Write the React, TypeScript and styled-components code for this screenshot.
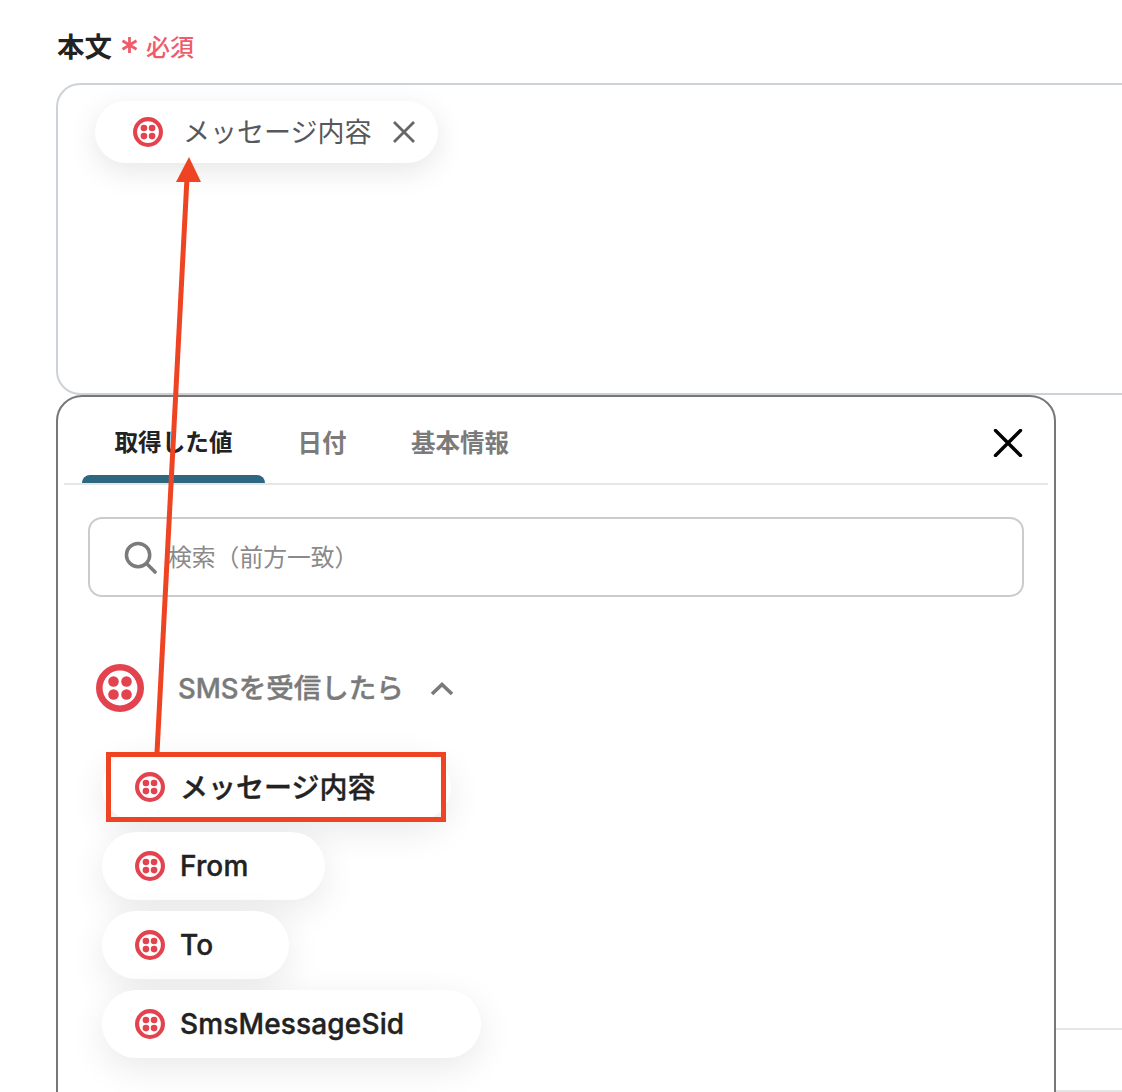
import * as React from 'react';
import styled, { createGlobalStyle } from 'styled-components';

const FONT = `Inter, "Noto Sans CJK JP", "Noto Sans", sans-serif`;

const GlobalStyle = createGlobalStyle`
  html, body {
    margin: 0;
    padding: 0;
    background: #fff;
  }
  body {
    font-family: ${FONT};
    overflow: hidden;
  }
`;

const Page = styled.div`
  position: relative;
  width: 1122px;
  height: 1092px;
  overflow: hidden;
  padding: 27px 0 0 56px;
  box-sizing: border-box;
`;

const FieldLabel = styled.div`
  display: flex;
  align-items: center;
  height: 36px;
  gap: 9px;
  margin-bottom: 20px;
  margin-left: 1px;
`;

const LabelText = styled.span`
  font-size: 27.5px;
  font-weight: 700;
  color: #222;
`;

const Required = styled.span`
  display: flex;
  align-items: center;
  gap: 8px;
  font-size: 24px;
  font-weight: 500;
  color: #ef5b6a;
`;

const TextArea = styled.div`
  width: 1200px;
  height: 312px;
  box-sizing: border-box;
  border: 2px solid #ccd2d8;
  border-radius: 24px;
  padding: 16px 37px;
`;

const SelectedChip = styled.div`
  display: inline-flex;
  align-items: center;
  height: 62px;
  width: 343px;
  box-sizing: border-box;
  padding-left: 38px;
  background: #fff;
  border-radius: 31px;
  box-shadow: 0 8px 30px rgba(0, 0, 0, 0.1);
`;

const ChipText = styled.span`
  margin: 0 0 3px 20px;
  font-size: 27px;
  color: #55595e;
  white-space: nowrap;
`;

const ChipClose = styled.svg`
  margin-left: 21px;
  flex: none;
`;

const Lower = styled.div`
  display: flex;
  align-items: flex-start;
`;

const Panel = styled.div`
  width: 1000px;
  height: 760px;
  flex: none;
  box-sizing: border-box;
  border: 2px solid #777;
  border-radius: 26px;
  background: #fff;
  padding: 0 6px;
`;

const TabBar = styled.div`
  display: flex;
  align-items: flex-end;
  height: 86px;
  border-bottom: 2px solid #e6e6e6;
  position: relative;
`;

const Tab = styled.div<{ $active?: boolean; $width: number }>`
  position: relative;
  width: ${({ $width }) => $width}px;
  height: 79px;
  box-sizing: border-box;
  display: flex;
  justify-content: center;
  padding-top: 21px;
  font-size: ${({ $active }) => ($active ? 23.6 : 24.5)}px;
  line-height: 36px;
  font-weight: 700;
  white-space: nowrap;
  color: ${({ $active }) => ($active ? '#222' : '#7b7b7b')};
  ${({ $active }) =>
    $active &&
    `
    margin-left: 18px;
    &::after {
      content: '';
      position: absolute;
      left: 0;
      right: 0;
      bottom: 0;
      height: 8px;
      background: #2e6880;
      border-radius: 8px 8px 0 0;
    }
  `}
`;

const CloseIcon = styled.svg`
  position: absolute;
  right: 25px;
  top: 32px;
`;

const SearchBox = styled.div`
  display: flex;
  align-items: center;
  width: 936px;
  height: 80px;
  box-sizing: border-box;
  margin: 32px 0 0 24px;
  padding-left: 34px;
  border: 2px solid #ccc;
  border-radius: 14px;
`;

const Placeholder = styled.span`
  margin: 0 0 3px 11px;
  font-size: 23.8px;
  color: #8a8a8a;
  white-space: nowrap;
`;

const GroupHeader = styled.div`
  display: flex;
  align-items: center;
  height: 48px;
  margin: 67px 0 0 32px;
`;

const GroupTitle = styled.span`
  margin: 0 0 5px 34px;
  font-size: 27.5px;
  font-weight: 500;
  -webkit-text-stroke: 0.4px #7a7a7a;
  color: #7a7a7a;
  white-space: nowrap;
`;

const Chevron = styled.svg`
  margin: 0 0 -1px 26px;
  flex: none;
`;

const ValueList = styled.div`
  display: flex;
  flex-direction: column;
  align-items: flex-start;
  gap: 11px;
  margin: 41px 0 0 38px;
`;

const ValuePill = styled.div<{ $width: number }>`
  position: relative;
  display: flex;
  align-items: center;
  width: ${({ $width }) => $width}px;
  height: 68px;
  box-sizing: border-box;
  padding-left: 33px;
  background: #fff;
  border-radius: 34px;
  box-shadow: 0 10px 36px rgba(0, 0, 0, 0.09);
`;

const ValueText = styled.span<{ $cjk?: boolean }>`
  margin-left: 15px;
  margin-bottom: ${({ $cjk }) => ($cjk ? 2 : 0)}px;
  font-size: 28px;
  font-weight: 500;
  -webkit-text-stroke: 0.4px #222;
  letter-spacing: ${({ $cjk }) => ($cjk ? 0 : 0.15)}px;
  color: #222;
  white-space: nowrap;
`;

const Highlight = styled.div`
  position: absolute;
  left: 4px;
  top: -1px;
  width: 340px;
  height: 70px;
  box-sizing: border-box;
  border: 5px solid #ef4423;
`;

const SideColumn = styled.div`
  flex: 1;
  display: flex;
  flex-direction: column;
  padding-top: 633px;
`;

const SideField = styled.div`
  height: 60px;
  border-top: 2px solid #e6e6e6;
`;

const ArrowOverlay = styled.svg`
  position: absolute;
  left: 0;
  top: 0;
  pointer-events: none;
`;

const TwilioIcon: React.FC<{ size: number }> = ({ size }) => (
  <svg width={size} height={size} viewBox="0 0 48 48" style={{ flex: 'none' }}>
    <circle cx="24" cy="24" r="20.7" fill="none" stroke="#e2434f" strokeWidth="6.6" />
    <circle cx="17.5" cy="17.5" r="5.3" fill="#e2434f" />
    <circle cx="30.5" cy="17.5" r="5.3" fill="#e2434f" />
    <circle cx="17.5" cy="30.5" r="5.3" fill="#e2434f" />
    <circle cx="30.5" cy="30.5" r="5.3" fill="#e2434f" />
  </svg>
);

const values = [
  { label: 'From', width: 223 },
  { label: 'To', width: 187 },
  { label: 'SmsMessageSid', width: 379 },
];

export default function App() {
  return (
    <Page>
      <GlobalStyle />
      <FieldLabel>
        <LabelText>本文</LabelText>
        <Required>
          <svg width="17" height="18" viewBox="0 0 17 18">
            <path
              d="M8.5 1v16M1.5 4.8l14 8.4M15.5 4.8l-14 8.4"
              stroke="#ef5b6a"
              strokeWidth="2.8"
              fill="none"
            />
          </svg>
          必須
        </Required>
      </FieldLabel>
      <TextArea>
        <SelectedChip>
          <TwilioIcon size={30} />
          <ChipText>メッセージ内容</ChipText>
          <ChipClose width="24" height="24" viewBox="0 0 24 24">
            <path d="M2 2l20 20M22 2L2 22" stroke="#666" strokeWidth="2.8" fill="none" />
          </ChipClose>
        </SelectedChip>
      </TextArea>
      <Lower>
        <Panel>
          <TabBar>
            <Tab $active $width={183}>取得した値</Tab>
            <Tab $width={114}>日付</Tab>
            <Tab $width={162}>基本情報</Tab>
            <CloseIcon width="30" height="28" viewBox="0 0 30 28">
              <path
                d="M2.5 1.5l25 25M27.5 1.5l-25 25"
                stroke="#000"
                strokeWidth="3.4"
                strokeLinecap="round"
                fill="none"
              />
            </CloseIcon>
          </TabBar>
          <SearchBox>
            <svg width="33" height="33" viewBox="0 0 34 34" style={{ flex: 'none' }}>
              <circle cx="14.5" cy="14.5" r="12" fill="none" stroke="#7b7b7b" strokeWidth="3.6" />
              <path d="M23.5 23.5L32 32" stroke="#7b7b7b" strokeWidth="3.6" strokeLinecap="round" />
            </svg>
            <Placeholder>検索（前方一致）</Placeholder>
          </SearchBox>
          <GroupHeader>
            <TwilioIcon size={48} />
            <GroupTitle>SMSを受信したら</GroupTitle>
            <Chevron width="24" height="14" viewBox="0 0 24 14">
              <path d="M2 12L12 2.5L22 12" stroke="#7a7a7a" strokeWidth="3.6" fill="none" />
            </Chevron>
          </GroupHeader>
          <ValueList>
            <ValuePill $width={349}>
              <TwilioIcon size={30} />
              <ValueText $cjk>メッセージ内容</ValueText>
              <Highlight />
            </ValuePill>
            {values.map((v) => (
              <ValuePill key={v.label} $width={v.width}>
                <TwilioIcon size={30} />
                <ValueText>{v.label}</ValueText>
              </ValuePill>
            ))}
          </ValueList>
        </Panel>
        <SideColumn>
          <SideField />
          <SideField />
        </SideColumn>
      </Lower>
      <ArrowOverlay width="1122" height="1092" viewBox="0 0 1122 1092">
        <path d="M157 753L187 178" stroke="#ef4423" strokeWidth="5" fill="none" />
        <path d="M189 157L201 182L176 182Z" fill="#ef4423" />
      </ArrowOverlay>
    </Page>
  );
}
